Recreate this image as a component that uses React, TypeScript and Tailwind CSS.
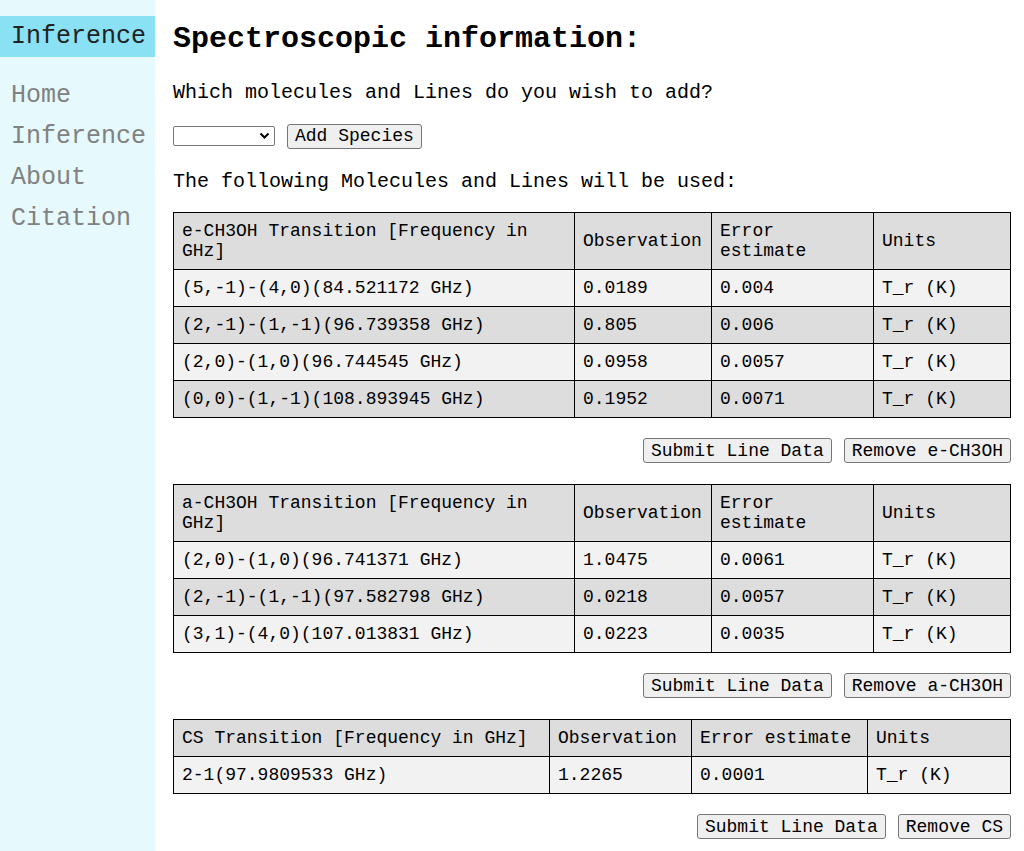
import React from "react";

type Row = [string, string, string, string];

interface SpeciesTableProps {
  name: string;
  header: string;
  cols: number[];
  rows: Row[];
}

const e: Row[] = [
  ["(5,-1)-(4,0)(84.521172 GHz)", "0.0189", "0.004", "T_r (K)"],
  ["(2,-1)-(1,-1)(96.739358 GHz)", "0.805", "0.006", "T_r (K)"],
  ["(2,0)-(1,0)(96.744545 GHz)", "0.0958", "0.0057", "T_r (K)"],
  ["(0,0)-(1,-1)(108.893945 GHz)", "0.1952", "0.0071", "T_r (K)"],
];

const a: Row[] = [
  ["(2,0)-(1,0)(96.741371 GHz)", "1.0475", "0.0061", "T_r (K)"],
  ["(2,-1)-(1,-1)(97.582798 GHz)", "0.0218", "0.0057", "T_r (K)"],
  ["(3,1)-(4,0)(107.013831 GHz)", "0.0223", "0.0035", "T_r (K)"],
];

const cs: Row[] = [["2-1(97.9809533 GHz)", "1.2265", "0.0001", "T_r (K)"]];

function Btn({ children }: { children: React.ReactNode }) {
  return (
    <button className="h-[25px] px-[7px] bg-[#efefef] border border-[#767676] rounded-[3px] text-[18px] leading-[20px] text-black">
      {children}
    </button>
  );
}

function SpeciesTable({ name, header, cols, rows }: SpeciesTableProps) {
  const cell = "border border-black px-[8px] py-[8px] text-left font-normal align-middle";
  return (
    <div>
      <table className="w-full table-fixed border-collapse text-[18px] leading-[20px]">
        <colgroup>
          {cols.map((w, i) => (
            <col key={i} style={{ width: w }} />
          ))}
        </colgroup>
        <thead>
          <tr className="bg-[#dddddd]">
            <th className={cell}>{header}</th>
            <th className={cell}>Observation</th>
            <th className={cell}>Error estimate</th>
            <th className={cell}>Units</th>
          </tr>
        </thead>
        <tbody>
          {rows.map((r, i) => (
            <tr key={i} className={i % 2 === 0 ? "bg-[#f2f2f2]" : "bg-[#dddddd]"}>
              {r.map((v, j) => (
                <td key={j} className={cell}>
                  {v}
                </td>
              ))}
            </tr>
          ))}
        </tbody>
      </table>
      <div className="flex justify-end gap-[12px] mt-[20px] mb-[21px]">
        <Btn>Submit Line Data</Btn>
        <Btn>Remove {name}</Btn>
      </div>
    </div>
  );
}

export default function App() {
  return (
    <div className="flex min-h-screen font-['Liberation_Mono',monospace] text-black bg-white">
      {/* Sidebar */}
      <nav className="w-[155px] shrink-0 bg-[#e6f9fd] pt-[16px]">
        <div className="h-[41px] bg-[#89e1f3] pl-[11px] flex items-center text-[25px] text-[#222]">
          Inference
        </div>
        <div className="mt-[18px] flex flex-col">
          {["Home", "Inference", "About", "Citation"].map((n) => (
            <a key={n} className="h-[41px] pl-[11px] flex items-center text-[25px] text-[#818181]">
              {n}
            </a>
          ))}
        </div>
      </nav>

      {/* Main */}
      <main className="flex-1 pl-[18px] pr-[14px] flex flex-col">
        <h1 className="mt-[22px] text-[30px] leading-[34px] font-bold">Spectroscopic information:</h1>
        <p className="mt-[25px] text-[20px] leading-[23px]">Which molecules and Lines do you wish to add?</p>
        <div className="mt-[19px] flex items-center gap-[12px] h-[26px]">
          <div className="relative w-[102px] h-[20px] border border-[#767676] rounded-[2px] bg-white">
            <svg className="absolute right-[4px] top-[5px]" width="11" height="8" viewBox="0 0 11 8">
              <polyline points="1.5,1.5 5.5,5.5 9.5,1.5" fill="none" stroke="#000" strokeWidth="2" />
            </svg>
          </div>
          <Btn>Add Species</Btn>
        </div>
        <p className="mt-[21px] text-[20px] leading-[23px]">The following Molecules and Lines will be used:</p>
        <div className="mt-[19px]">
          <SpeciesTable
            name="e-CH3OH"
            header="e-CH3OH Transition [Frequency in GHz]"
            cols={[401, 137, 162, 137]}
            rows={e}
          />
          <SpeciesTable
            name="a-CH3OH"
            header="a-CH3OH Transition [Frequency in GHz]"
            cols={[401, 137, 162, 137]}
            rows={a}
          />
          <SpeciesTable
            name="CS"
            header="CS Transition [Frequency in GHz]"
            cols={[376, 142, 176, 143]}
            rows={cs}
          />
        </div>
      </main>
    </div>
  );
}
